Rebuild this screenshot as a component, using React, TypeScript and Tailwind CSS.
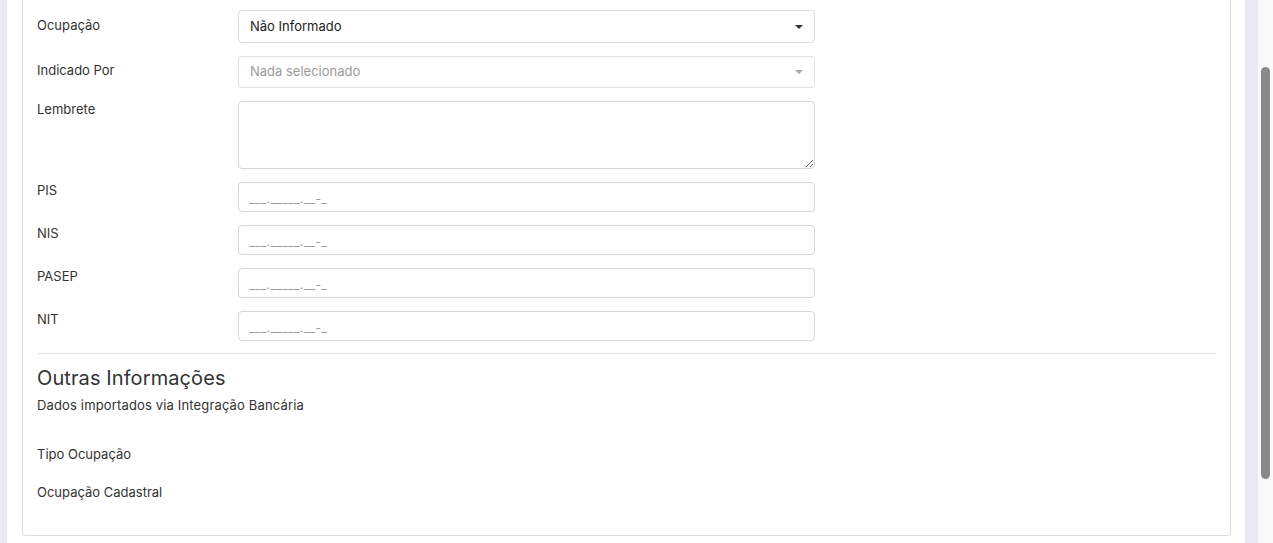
import React from "react";

const Caret = ({ light }: { light?: boolean }) => (
  <span
    className={
      light
        ? "inline-block w-0 h-0 border-l-[4px] border-r-[4px] border-t-[4px] border-l-transparent border-r-transparent border-t-[#aaa]"
        : "inline-block w-0 h-0 border-l-[4px] border-r-[4px] border-t-[4px] border-l-transparent border-r-transparent border-t-[#333]"
    }
  />
);

const MaskRow = ({ label }: { label: string }) => (
  <div className="flex items-start mt-[13px]">
    <div className="w-[201px] pt-[2px] leading-[13px] text-[13px] text-[#333]">{label}</div>
    <input
      type="text"
      placeholder="___._____.__-_"
      className="w-[577px] h-[30px] rounded-[4px] border border-[#d3d6da] bg-white pl-[10px] pt-[2px] text-[12px] tracking-[0.4px] text-[#333] placeholder:text-[#9a9a9a] outline-none"
    />
  </div>
);

export default function App() {
  return (
    <div className="w-[1273px] h-[543px] overflow-hidden flex bg-white font-['Inter',sans-serif]">
      <div className="w-[7px] shrink-0 bg-[#eaebf1]" />
      <div className="flex-1 pl-[15px] pr-[14px]">
        <div className="h-[536px] border border-t-0 border-[#dcdcdc] rounded-b-[4px] px-[14px] pt-[10px]">
          {/* Ocupação */}
          <div className="flex items-start">
            <div className="w-[201px] pt-[9px] leading-[13px] text-[13px] text-[#333]">Ocupação</div>
            <div className="w-[577px] h-[33px] rounded-[4px] border border-[#d9dcdf] bg-white flex items-center justify-between pl-[11px] pr-[11px] text-[13px] text-[#222]">
              <span>Não Informado</span>
              <Caret />
            </div>
          </div>
          {/* Indicado Por */}
          <div className="flex items-start mt-[13px]">
            <div className="w-[201px] pt-[8px] leading-[13px] text-[13px] text-[#333]">Indicado Por</div>
            <div className="w-[577px] h-[32px] rounded-[4px] border border-[#dfe1e4] bg-white flex items-center justify-between pl-[11px] pr-[11px] text-[13px] text-[#9a9a9a]">
              <span>Nada selecionado</span>
              <Caret light />
            </div>
          </div>
          {/* Lembrete */}
          <div className="flex items-start mt-[13px]">
            <div className="w-[201px] pt-[2px] leading-[13px] text-[13px] text-[#333]">Lembrete</div>
            <textarea className="w-[577px] h-[68px] rounded-[4px] border border-[#d3d6da] bg-white outline-none block" />
          </div>
          <MaskRow label="PIS" />
          <MaskRow label="NIS" />
          <MaskRow label="PASEP" />
          <MaskRow label="NIT" />

          <div className="mt-[12px] border-t border-[#e3e3e3]" />

          <div className="mt-[14px] text-[20px] leading-[20px] tracking-[0.1px] text-[#333]">Outras Informações</div>
          <div className="mt-[11px] text-[13px] leading-[13px] tracking-[0.15px] text-[#333]">Dados importados via Integração Bancária</div>
          <div className="mt-[36px] text-[13px] leading-[13px] text-[#333]">Tipo Ocupação</div>
          <div className="mt-[25px] text-[13px] leading-[13px] text-[#333]">Ocupação Cadastral</div>
        </div>
      </div>
      <div className="w-[13px] shrink-0 bg-[#e9eaf1]" />
      <div className="w-[15px] shrink-0 bg-[#f9f9f9] pt-[67px] pl-[3px]">
        <div className="w-[9px] h-[412px] rounded-full bg-[#8a8a8a]" />
      </div>
    </div>
  );
}
